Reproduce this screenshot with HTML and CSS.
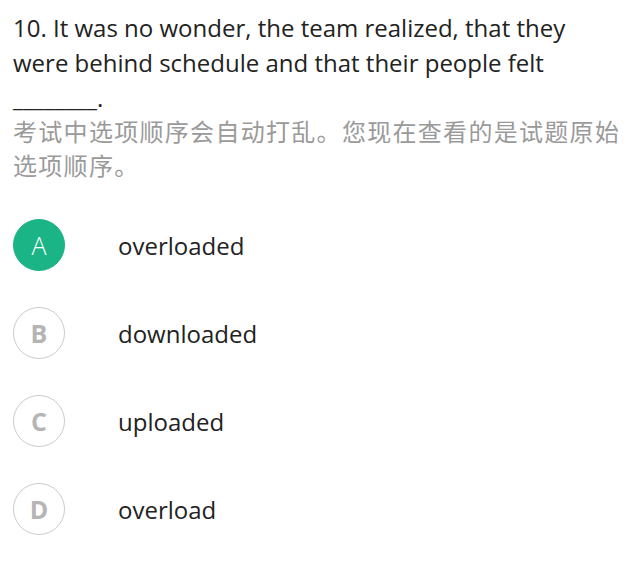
FILE: index.html
```html
<!DOCTYPE html>
<html lang="zh">
<head>
<meta charset="utf-8">
<link rel="stylesheet" href="styles.css">
</head>
<body>
<div class="page">
  <div class="question">10. It was no wonder, the team realized, that they were behind schedule and that their people felt ________.</div>
  <div class="note">考试中选项顺序会自动打乱。您现在查看的是试题原始选项顺序。</div>
  <div class="options">
    <div class="option"><span class="badge selected">A</span><span class="text">overloaded</span></div>
    <div class="option"><span class="badge">B</span><span class="text">downloaded</span></div>
    <div class="option"><span class="badge">C</span><span class="text">uploaded</span></div>
    <div class="option"><span class="badge">D</span><span class="text">overload</span></div>
  </div>
</div>
</body>
</html>
```
FILE: styles.css
```css
html, body { margin: 0; padding: 0; background: #fff; }
.page {
  padding: 10px 13px 0 13px;
  font-family: "Open Sans", "Noto Sans CJK SC", sans-serif;
  color: #222;
}
.question {
  font-size: 24px;
  line-height: 35px;
  width: 560px;
}
.note {
  font-family: "Noto Sans CJK SC", sans-serif;
  font-size: 24px;
  letter-spacing: 1.3px;
  line-height: 34px;
  color: #9a9a9a;
  margin-top: -1px;
}
.options {
  margin-top: 37px;
  display: flex;
  flex-direction: column;
  gap: 36px;
}
.option {
  display: flex;
  align-items: center;
  height: 52px;
}
.badge {
  box-sizing: border-box;
  width: 52px;
  height: 52px;
  border: 1.5px solid #cccccc;
  border-radius: 50%;
  display: flex;
  align-items: center;
  justify-content: center;
  font-size: 25px;
  font-weight: 700;
  color: #b5b5b5;
  flex: none;
}
.badge.selected {
  background: #1bb487;
  border-color: #1bb487;
  color: #fff;
  font-weight: 300;
}
.text {
  margin-left: 53px;
  font-size: 24px;
}
```
